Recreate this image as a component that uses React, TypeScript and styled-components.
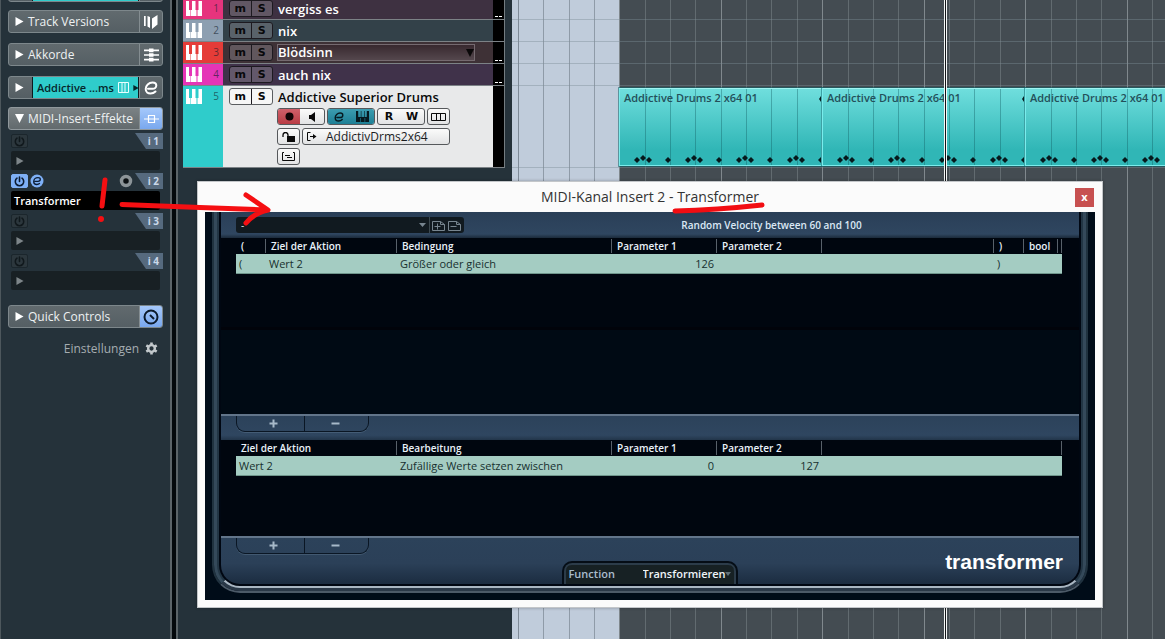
import React from 'react';
import styled, { createGlobalStyle, css } from 'styled-components';

const GlobalStyle = createGlobalStyle`
  * { box-sizing: border-box; }
  body {
    margin: 0;
    background: #25323a;
    font-family: 'Open Sans', 'Noto Sans', sans-serif;
    overflow: hidden;
  }
  button, select { font-family: inherit; margin: 0; }
  button { padding: 0; cursor: pointer; }
  svg { display: block; flex: none; }
`;

const Desktop = styled.main`
  position: relative;
  display: flex;
  min-height: 100vh;
  overflow: hidden;
  background: #25323a;
`;

/* ---------- inspector ---------- */

const Sidebar = styled.aside`
  flex: none;
  width: 172px;
  padding: 0 7px;
  border-left: 1px solid #4d575c;
  border-right: 2px solid #5b6468;
`;

const Splitter = styled.div`
  flex: none;
  width: 4px;
  background: #04090c;
`;

const Section = styled.div<{ $gap: number; $clipped?: boolean; $open?: boolean }>`
  display: flex;
  height: 23px;
  margin-top: ${(p) => (p.$clipped ? '-21px' : '0')};
  margin-bottom: ${(p) => p.$gap}px;
  border: 1px solid ${(p) => (p.$open ? '#90989c' : '#7d878b')};
  border-radius: 3px;
  overflow: hidden;
  background: ${(p) =>
    p.$open ? 'linear-gradient(#7b8285, #626a6d)' : 'linear-gradient(#616a6e, #555f64)'};
`;

const SectionToggle = styled.button<{ $narrow?: boolean }>`
  display: flex;
  align-items: center;
  gap: 4px;
  flex: ${(p) => (p.$narrow ? '0 0 23px' : '1')};
  min-width: 0;
  padding-left: 6px;
  border: 0;
  background: none;
  color: #eef1f2;
  font-size: 12px;
  line-height: 20px;
  white-space: nowrap;
`;

const ChannelName = styled.div`
  flex: 1;
  display: flex;
  align-items: center;
  gap: 4px;
  min-width: 0;
  padding-left: 4px;
  border-left: 1px solid #0c1a1e;
  border-right: 1px solid #0c1a1e;
  background: #2fcccb;
  color: #06262a;
  font-size: 11px;
  font-weight: 600;
  -webkit-font-smoothing: antialiased;
  white-space: nowrap;
`;

const SectionIcon = styled.button<{ $lit?: boolean }>`
  display: flex;
  align-items: center;
  justify-content: center;
  flex: 0 0 23px;
  border: 0;
  border-left: 1px solid #848d91;
  background: ${(p) => (p.$lit ? 'linear-gradient(#a5c8fb, #79a8ee)' : 'transparent')};
`;

const InsertList = styled.ol`
  list-style: none;
  margin: -5px 0 15px 3px;
  padding: 0;
`;

const Insert = styled.li`
  margin-bottom: 3px;
`;

const InsertHead = styled.div`
  display: flex;
  align-items: center;
  gap: 2px;
  height: 16px;
  margin-bottom: 2px;
`;

const PowerButton = styled.button<{ $on?: boolean }>`
  display: flex;
  align-items: center;
  justify-content: center;
  width: 17px;
  height: 14px;
  border: 1px solid ${(p) => (p.$on ? '#7fb0f5' : '#1b262c')};
  border-radius: 2px;
  background: ${(p) => (p.$on ? '#7eb0f7' : '#2c373d')};
`;

const RoundButton = styled.button<{ $push?: boolean }>`
  display: flex;
  border: 0;
  background: none;
  margin-left: ${(p) => (p.$push ? 'auto' : '0')};
`;

const InsertTag = styled.span<{ $push?: boolean }>`
  width: 28px;
  height: 16px;
  margin-left: ${(p) => (p.$push ? 'auto' : '0')};
  padding-right: 4px;
  background: #566a7e;
  clip-path: polygon(0 0, 100% 0, 100% 100%, 11px 100%);
  color: #c9d8ea;
  font-size: 10px;
  font-weight: 700;
  line-height: 16px;
  text-align: right;
`;

const InsertSlot = styled.button<{ $loaded?: boolean }>`
  display: flex;
  align-items: center;
  width: 149px;
  height: 19px;
  padding-left: ${(p) => (p.$loaded ? '3px' : '5px')};
  border: 0;
  border-radius: 2px;
  background: ${(p) => (p.$loaded ? '#000' : '#182024')};
  color: #fff;
  font-size: 11px;
  font-weight: 600;
`;

const SettingsRow = styled.button`
  display: flex;
  align-items: center;
  justify-content: flex-end;
  gap: 6px;
  width: 100%;
  height: 20px;
  padding-right: 5px;
  border: 0;
  background: none;
  color: #a5adb1;
  font-size: 12px;
`;

/* ---------- track list ---------- */

const TrackPanel = styled.section`
  flex: none;
  width: 336px;
  padding: 0 7px 0 5px;
  border-left: 2px solid #5b6468;
`;

const TrackRows = styled.ol`
  list-style: none;
  margin: -2px 0 0;
  padding: 0;
  border-right: 1px solid #737c80;
`;

const Track = styled.li<{ $bg: string; $tall?: boolean }>`
  display: flex;
  height: ${(p) => (p.$tall ? '82px' : '22px')};
  border-bottom: 1px solid #7c8286;
  background: ${(p) => p.$bg};
`;

const TrackStrip = styled.div<{ $color: string }>`
  flex: none;
  display: flex;
  align-items: flex-start;
  justify-content: space-between;
  width: 40px;
  padding: 3px 4px 0 3px;
  background: ${(p) => p.$color};
  color: rgba(20, 30, 45, 0.65);
  font-size: 10px;
  line-height: 14px;
`;

const TrackBody = styled.div`
  flex: 1;
  display: flex;
  align-items: flex-start;
  gap: 5px;
  min-width: 0;
  padding: 2px 0 0 6px;
`;

const MuteSolo = styled.div<{ $light?: boolean }>`
  flex: none;
  display: flex;
  width: 44px;
  height: 17px;
  border: 1px solid ${(p) => (p.$light ? '#5a5d60' : '#1d1a20')};
  border-radius: 3px;
  background: ${(p) => (p.$light ? '#f6f6f6' : 'rgba(190, 185, 195, 0.28)')};
`;

const LetterButton = styled.button`
  flex: 1;
  border: 0;
  background: none;
  color: #08080a;
  font-family: 'DejaVu Sans', sans-serif;
  font-size: 11px;
  font-weight: 700;
  line-height: 15px;
  & + & { border-left: 1px solid #1d1a20; }
`;

const TrackMain = styled.div`
  flex: 1;
  min-width: 0;
`;

const TrackName = styled.div<{ $dark?: boolean }>`
  margin-bottom: ${(p) => (p.$dark ? '2px' : '0')};
  color: ${(p) => (p.$dark ? '#08090a' : '#fff')};
  font-size: 13px;
  font-weight: 600;
  line-height: 18px;
  white-space: nowrap;
`;

const NameSelect = styled.div`
  position: relative;
  width: 198px;
  height: 17px;
  margin-left: -1px;
  select {
    appearance: none;
    display: block;
    width: 100%;
    height: 17px;
    padding: 0;
    border: 1px solid #756a70;
    background: linear-gradient(#38292f, #54474d);
    color: #fff;
    font-size: 13px;
    font-weight: 600;
    line-height: 15px;
  }
  svg {
    position: absolute;
    right: 1px;
    top: 5px;
    pointer-events: none;
  }
`;

const Meter = styled.div`
  flex: none;
  display: flex;
  align-items: flex-end;
  gap: 1px;
  width: 11px;
  padding: 0 2px 2px;
  background: #000;
  i {
    width: 3px;
    height: 1px;
    background: #fff;
  }
`;

const ControlRow = styled.div`
  display: flex;
  gap: 2px;
  margin: 0 0 3px -1px;
`;

const ControlGroup = styled.div`
  display: flex;
  height: 17px;
  border: 1px solid #55585b;
  border-radius: 3px;
  overflow: hidden;
  background: linear-gradient(#fbfbfb, #e2e3e4);
`;

const Control = styled.button<{ $w: number; $tone?: 'red' | 'teal' }>`
  display: flex;
  align-items: center;
  justify-content: center;
  width: ${(p) => p.$w}px;
  border: 0;
  color: #0a0a0a;
  font-family: 'DejaVu Sans', sans-serif;
  font-size: 11px;
  font-weight: 700;
  line-height: 15px;
  background: ${(p) =>
    p.$tone === 'red'
      ? 'linear-gradient(#d0606a, #b83c44)'
      : p.$tone === 'teal'
        ? 'linear-gradient(#3c9db0, #1d7f95)'
        : 'none'};
  & + & { border-left: ${(p) => (p.$tone ? '1px solid #a8cfd6' : '0')}; }
`;

const OutputButton = styled.button`
  display: flex;
  align-items: center;
  gap: 9px;
  width: 148px;
  height: 17px;
  padding-left: 4px;
  border: 1px solid #55585b;
  border-radius: 3px;
  background: linear-gradient(#fbfbfb, #e2e3e4);
  color: #1a1c1e;
  font-size: 12px;
  line-height: 15px;
`;

/* ---------- arrangement ---------- */

const gridColumns = (bar: string, beat: string) => css`
  background-image:
    linear-gradient(${bar}, ${bar}), linear-gradient(${beat}, ${beat}),
    linear-gradient(${beat}, ${beat}), linear-gradient(${beat}, ${beat}),
    linear-gradient(${bar}, ${bar}), linear-gradient(${beat}, ${beat}),
    linear-gradient(${beat}, ${beat}), linear-gradient(${beat}, ${beat});
  background-size: 1px 100%;
`;

const Arrangement = styled.section`
  position: relative;
  flex: 1;
  display: flex;
  min-width: 0;
  overflow: hidden;
`;

const LaneRows = styled.div`
  position: absolute;
  inset: -2px 0 auto;
  pointer-events: none;
`;

const LaneLine = styled.div<{ $tall?: boolean }>`
  height: ${(p) => (p.$tall ? '82px' : '22px')};
  border-bottom: 1px solid rgba(125, 140, 150, 0.42);
`;

const PreRoll = styled.div`
  flex: none;
  width: 107px;
  background-color: #c0ccdb;
  ${gridColumns('#7f8b98', '#8f9ba8')}
  background-position: 6px 0, 31px 0, 57px 0, 82px 0, 6px 0, 31px 0, 57px 0, 82px 0;
  background-repeat: no-repeat;
`;

const BarColumn = styled.div`
  flex: none;
  width: 203px;
  background-color: #444c52;
  ${gridColumns('#80888d', '#626b70')}
  background-position: 0 0, 26px 0, 51px 0, 76px 0, 102px 0, 127px 0, 152px 0, 178px 0;
  background-repeat: no-repeat;
`;

const ClipLane = styled.div`
  position: absolute;
  left: 107px;
  top: 88px;
  display: flex;
`;

const Clip = styled.article`
  position: relative;
  flex: none;
  width: 203px;
  height: 78px;
  padding-left: 4px;
  border: 1px solid #7aecec;
  border-top-color: #a0f4f2;
  outline: 1px solid rgba(12, 100, 105, 0.55);
  background-color: #35bcbc;
  background-image:
    linear-gradient(rgba(16, 90, 95, 0.38), rgba(16, 90, 95, 0.38)),
    linear-gradient(rgba(16, 90, 95, 0.38), rgba(16, 90, 95, 0.38)),
    linear-gradient(rgba(16, 90, 95, 0.38), rgba(16, 90, 95, 0.38)),
    linear-gradient(rgba(16, 90, 95, 0.38), rgba(16, 90, 95, 0.38)),
    linear-gradient(rgba(16, 90, 95, 0.38), rgba(16, 90, 95, 0.38)),
    linear-gradient(rgba(16, 90, 95, 0.38), rgba(16, 90, 95, 0.38)),
    linear-gradient(rgba(16, 90, 95, 0.38), rgba(16, 90, 95, 0.38)),
    linear-gradient(#6fdedd, #30b6b6 80%);
  background-size:
    1px 100%, 1px 100%, 1px 100%, 1px 100%, 1px 100%, 1px 100%, 1px 100%, 100% 100%;
  background-position:
    25px 0, 50px 0, 75px 0, 101px 0, 126px 0, 151px 0, 177px 0, 0 0;
  background-repeat: no-repeat;
  color: #24505a;
  font-size: 11px;
  font-weight: 600;
  line-height: 18px;
  white-space: nowrap;
  svg {
    position: absolute;
    left: 0;
    top: 0;
  }
`;

const Playhead = styled.div`
  position: absolute;
  inset: 0 auto 0 432px;
  width: 3px;
  border: solid #f4f6f6;
  border-width: 0 1px;
  background: #101417;
`;

/* ---------- plug-in window ---------- */

const Dialog = styled.section`
  position: absolute;
  left: 197px;
  right: 62px;
  top: 181px;
  padding: 0 7px 7px;
  border: 1px solid #c3c6c9;
  background: #fbfbfb;
  box-shadow: 0 0 3px rgba(0, 0, 0, 0.3);
`;

const TitleBar = styled.header`
  display: grid;
  grid-template-columns: 1fr auto 1fr;
  align-items: center;
  height: 30px;
`;

const Title = styled.h1`
  grid-column: 2;
  margin: 0;
  color: #333;
  font-size: 14px;
  font-weight: 400;
  line-height: 30px;
  white-space: nowrap;
`;

const Marked = styled.span`
  position: relative;
  svg {
    position: absolute;
    left: -6px;
    top: 14px;
  }
`;

const CloseButton = styled.button`
  justify-self: end;
  width: 19px;
  height: 19px;
  margin-right: 1px;
  border: 0;
  background: #c75050;
  color: #fff;
  font-size: 11px;
  font-weight: 700;
  line-height: 16px;
`;

const PluginShell = styled.div`
  padding: 0 7px 7px;
  background: #000c18;
`;

const OuterRail = styled.div`
  border: solid #20323f;
  border-width: 0 2px 2px;
  border-bottom-color: #4c5a68;
  border-radius: 0 0 28px 28px;
`;

const MiddleRail = styled.div`
  border: solid #34495a;
  border-width: 0 3px 3px;
  border-bottom-color: #2a3847;
  border-radius: 0 0 26px 26px;
  background: #34495a;
`;

const InnerRail = styled.div`
  border: solid #223544;
  border-width: 0 2px 2px;
  border-bottom-color: #a9b6c2;
  border-radius: 0 0 23px 23px;
  background: #000712;
  padding: 0 2px 2px;
`;

const Plugin = styled.div`
  border-radius: 0 0 19px 19px;
  overflow: hidden;
  background: #00060f;
`;

const Toolbar = styled.div`
  display: flex;
  align-items: center;
  height: 26px;
  padding-left: 15px;
  background: linear-gradient(#2a3f57, #2f4660 85%, #1b2a3a);
`;

const PresetBar = styled.div`
  display: flex;
  align-items: center;
  gap: 2px;
  width: 228px;
  height: 16px;
  padding-right: 2px;
  border-radius: 3px;
  background: #111a20;
`;

const PresetSelect = styled.div`
  position: relative;
  flex: 1;
  border-right: 1px solid #3b474e;
  select {
    appearance: none;
    display: block;
    width: 100%;
    height: 16px;
    padding: 0 5px;
    border: 0;
    background: none;
    color: #dfe7ee;
    font-size: 10px;
  }
  svg {
    position: absolute;
    right: 3px;
    top: 6px;
    pointer-events: none;
  }
`;

const IconButton = styled.button`
  display: flex;
  border: 0;
  background: none;
`;

const PresetName = styled.output`
  flex: 1;
  color: #dbe8f5;
  font-size: 10px;
  font-weight: 600;
  text-align: center;
`;

const ListPane = styled.div<{ $h: number }>`
  min-height: ${(p) => p.$h}px;
  padding: 0 17px 0 15px;
  background: #00060f;
  & + & { border-top: 3px solid #01030a; background: #000a14; }
`;

const LogicTable = styled.table`
  width: 100%;
  table-layout: fixed;
  border-collapse: separate;
  border-spacing: 0;
  th {
    height: 16px;
    padding: 0 0 0 5px;
    background: linear-gradient(#58616a, #58616a) right 1px / 1px 14px no-repeat;
    color: #eaf2fa;
    font-size: 10px;
    font-weight: 600;
    line-height: 16px;
    text-align: left;
    white-space: nowrap;
  }
  td {
    height: 20px;
    padding: 0 3px;
    border-bottom: 1px solid #6f958b;
    background: #a4ccc2;
    color: #17302f;
    font-size: 11px;
    line-height: 19px;
    white-space: nowrap;
  }
`;

const NumberCell = styled.td`
  text-align: right;
`;

const Bar = styled.div<{ $foot?: boolean }>`
  display: grid;
  grid-template-columns: 1fr auto 1fr;
  align-items: start;
  height: ${(p) => (p.$foot ? '48px' : '26px')};
  padding: 0 16px 0 15px;
  border-top: 2px solid #62758a;
  background: ${(p) =>
    p.$foot
      ? 'linear-gradient(#2c425a, #2b4058 55%, #1b2c40)'
      : 'linear-gradient(#2c425a, #2f4660 80%, #22354a)'};
`;

const AddRemove = styled.div`
  display: flex;
  width: 133px;
  height: 16px;
  border: solid #0a1624;
  border-width: 0 1px 1px;
  border-radius: 0 0 9px 9px;
  box-shadow: 0 1px 0 rgba(120, 145, 170, 0.3);
  button {
    display: flex;
    justify-content: center;
    flex: 1;
    padding: 3px 2px 0 0;
    border: 0;
    background: none;
  }
  button:first-child { flex: 0 0 68px; border-right: 1px solid #0a1624; padding: 3px 0 0 5px; }
`;

const FunctionTab = styled.label`
  align-self: end;
  position: relative;
  display: flex;
  align-items: center;
  width: 176px;
  height: 23px;
  padding: 0 5px;
  border: solid #050d16;
  border-width: 2px 2px 0;
  border-radius: 10px 10px 0 0;
  background: #172124;
  box-shadow: inset 0 2px 0 #2c3c4a, inset 2px 0 0 #2c3c4a, inset -2px 0 0 #2c3c4a;
  color: #a9bccd;
  font-size: 11px;
  font-weight: 600;
  select {
    appearance: none;
    width: 88px;
    margin-left: auto;
    padding: 0;
    border: 0;
    background: none;
    color: #eef4f8;
    font-size: 11px;
    font-weight: 600;
  }
  svg {
    position: absolute;
    right: 5px;
    top: 9px;
    pointer-events: none;
  }
`;

const Brand = styled.strong`
  justify-self: end;
  margin-top: 11px;
  color: #fff;
  font-family: 'Liberation Sans', Arial, sans-serif;
  font-size: 21px;
  line-height: 26px;
`;

const Annotation = styled.svg`
  position: absolute;
  left: 90px;
  top: 170px;
  pointer-events: none;
`;

/* ---------- icons ---------- */

const ArrowRight = ({ color = '#fff', size = 9 }: { color?: string; size?: number }) => (
  <svg width={size} height={size} viewBox="0 0 9 9"><path d="M0.5 0L8.5 4.5L0.5 9Z" fill={color} /></svg>
);

const ArrowDown = ({ color = '#fff', w = 9, h = 9 }: { color?: string; w?: number; h?: number }) => (
  <svg width={w} height={h} viewBox="0 0 9 9" preserveAspectRatio="none"><path d="M0 0H9L4.5 9Z" fill={color} /></svg>
);

const PianoIcon = () => (
  <svg width="16" height="15" viewBox="0 0 16 15">
    <path d="M0 0H3V9H4.500V15H0ZM5 9H6V0H9.500V9H10.500V15H5ZM11.500 9H12.500V0H16V15H11.500Z" fill="#fff" />
  </svg>
);

const KeysIcon = () => (
  <svg width="13" height="11" viewBox="0 0 13 11">
    <path d="M0 0H2.200V6H4.800V0H5.400V6H8V0H8.600V6H10.800V0H13V11H9.200V7H8.600V11H4.600V7H4V11H0Z" fill="#061a20" />
  </svg>
);

const EditIcon = ({ color, size }: { color: string; size: number }) => (
  <svg width={size} height={size} viewBox="0 0 14 14" fill="none" stroke={color} strokeWidth="2" strokeLinecap="round">
    <path d="M4 7.800H8.500C10.500 7.800 12.300 6.500 12.300 4.500C12.300 2.500 10.500 1.500 8.500 1.500C4.800 1.500 1.700 4.500 1.700 8C1.700 11 4 12.600 6.500 12.600C8.500 12.600 10 12 11.500 10.500" />
  </svg>
);

const PowerIcon = ({ color }: { color: string }) => (
  <svg width="11" height="11" viewBox="0 0 11 11" fill="none" stroke={color} strokeWidth="1.600" strokeLinecap="round">
    <path d="M3 2.200A4.200 4.200 0 1 0 8 2.200M5.500 1V5.500" />
  </svg>
);

const VersionsIcon = () => (
  <svg width="14" height="14" viewBox="0 0 14 14" fill="#fff">
    <path d="M0 1H1.700V11H0ZM3.500 1L6 2V13L3.500 11.500ZM8 3.500L13.500 0V9.500L8 14Z" />
  </svg>
);

const ChordIcon = () => (
  <svg width="15" height="14" viewBox="0 0 15 14" fill="#fff">
    <path d="M0 1.500H15V3.200H0ZM0 6.200H15V7.800H0ZM0 10.800H15V12.500H0ZM5 0.500H9.500V4.200H5ZM5 5.200H9.500V8.800H5ZM5 9.800H9.500V13.500H5Z" />
  </svg>
);

const InsertIcon = () => (
  <svg width="15" height="10" viewBox="0 0 15 10" fill="none" stroke="#fff" strokeWidth="1.200">
    <path d="M0 5H15M4.500 1.500H10.500V8.500H4.500Z" />
  </svg>
);

const KnobIcon = () => (
  <svg width="16" height="16" viewBox="0 0 16 16" fill="none" stroke="#0b1a2c" strokeWidth="2">
    <circle cx="8" cy="8" r="6.500" />
    <path d="M7 6L11 10" />
  </svg>
);

const GearIcon = () => (
  <svg width="13" height="13" viewBox="0 0 14 14" fill="none" stroke="#c3c9cc">
    <circle cx="7" cy="7" r="3.600" strokeWidth="2.600" />
    <path d="M7 0.500V3M7 11V13.500M1.400 3.750L3.500 5M10.500 9L12.600 10.250M1.400 10.250L3.500 9M10.500 5L12.600 3.750" strokeWidth="2.800" />
  </svg>
);

const PresetIcon = ({ plus }: { plus?: boolean }) => (
  <svg width="14" height="11" viewBox="0 0 14 11" fill="none" stroke="#77858f">
    <path d="M0.500 1.500H8.500L12.500 4.500V10.500H0.500ZM8.500 1.500V4.500H12.500M2.500 6.500H8.500" />
    {plus && <path d="M5.500 3.500V9.500" />}
  </svg>
);

const SignIcon = ({ plus }: { plus?: boolean }) => (
  <svg width="9" height="9" viewBox="0 0 9 9" stroke="#a7b9c9" strokeWidth="2">
    <path d={plus ? 'M0.500 4.500H8.500M4.500 0.500V8.500' : 'M0.500 4.500H8.500'} />
  </svg>
);

const noteOffsets: [number, number][] = [];
[0, 51, 102, 153].forEach((beat) => {
  noteOffsets.push([beat + 17, 71], [beat + 23, 69], [beat + 29, 71]);
  noteOffsets.push([beat + 48, 71]);
});

const ClipNotes = () => (
  <svg width="201" height="76" viewBox="0 0 201 76" fill="#06191c">
    {noteOffsets.map(([x, y]) => (
      <path key={x} d={`M${x} ${y - 3}L${x + 3} ${y}L${x} ${y + 3}L${x - 3} ${y}Z`} />
    ))}
    <path d="M201 7L199 10L201 13Z" />
  </svg>
);

/* ---------- page ---------- */

const tracks = [
  { n: 1, name: 'vergiss es', strip: '#e6347d', bg: '#3e3141', signal: true },
  { n: 2, name: 'nix', strip: '#8d9fb1', bg: '#334149', signal: false },
  { n: 3, name: 'Blödsinn', strip: '#e53c38', bg: '#3e3136', signal: true, select: true },
  { n: 4, name: 'auch nix', strip: '#e535b7', bg: '#40324a', signal: true },
];

const inserts = [
  { id: 'i 1', name: '' },
  { id: 'i 2', name: 'Transformer' },
  { id: 'i 3', name: '' },
  { id: 'i 4', name: '' },
];

const MuteSoloPair = ({ light }: { light?: boolean }) => (
  <MuteSolo $light={light}>
    <LetterButton>m</LetterButton>
    <LetterButton>S</LetterButton>
  </MuteSolo>
);

const AddRemoveButtons = () => (
  <AddRemove>
    <button aria-label="Add line"><SignIcon plus /></button>
    <button aria-label="Remove line"><SignIcon /></button>
  </AddRemove>
);

const Inspector = () => (
  <Sidebar>
    <Section $gap={8} $clipped>
      <SectionToggle $narrow aria-label="Channel" />
      <ChannelName />
      <SectionIcon aria-label="Edit channel" />
    </Section>
    <Section $gap={10}>
      <SectionToggle><ArrowRight />Track Versions</SectionToggle>
      <SectionIcon aria-label="Versions"><VersionsIcon /></SectionIcon>
    </Section>
    <Section $gap={10}>
      <SectionToggle><ArrowRight />Akkorde</SectionToggle>
      <SectionIcon aria-label="Chords"><ChordIcon /></SectionIcon>
    </Section>
    <Section $gap={8}>
      <SectionToggle $narrow aria-label="Expand instrument"><ArrowRight /></SectionToggle>
      <ChannelName>
        Addictive ...ms
        <svg width="11" height="11" viewBox="0 0 11 11" fill="none" stroke="#e8ffff">
          <path d="M0.500 0.500H10.500V10.500H0.500ZM4 0.500V10.500M7 0.500V10.500" />
        </svg>
        <ArrowRight color="#06262a" size={6} />
      </ChannelName>
      <SectionIcon aria-label="Edit instrument"><EditIcon color="#fff" size={14} /></SectionIcon>
    </Section>
    <Section $gap={8} $open>
      <SectionToggle><ArrowDown />MIDI-Insert-Effekte</SectionToggle>
      <SectionIcon $lit aria-label="Bypass inserts"><InsertIcon /></SectionIcon>
    </Section>
    <InsertList>
      {inserts.map(({ id, name }) => (
        <Insert key={id}>
          <InsertHead>
            <PowerButton $on={!!name} aria-label={`Power ${id}`}>
              <PowerIcon color={name ? '#0b1c33' : '#10181c'} />
            </PowerButton>
            {name && (
              <>
                <RoundButton aria-label="Edit insert">
                  <svg width="14" height="14" viewBox="0 0 14 14">
                    <circle cx="7" cy="7" r="6.500" fill="#7eb0f7" />
                    <path d="M4.500 7.300H8C9.200 7.300 10.300 6.500 10.300 5.300C10.300 4.200 9.200 3.600 8 3.600C5.600 3.600 3.700 5.500 3.700 7.700C3.700 9.500 5.200 10.500 6.800 10.500C8 10.500 9 10 9.900 9.200" fill="none" stroke="#0b1c33" strokeWidth="1.300" />
                  </svg>
                </RoundButton>
                <RoundButton $push aria-label="Pre or post">
                  <svg width="14" height="14" viewBox="0 0 14 14">
                    <circle cx="7" cy="7" r="4.500" fill="#0c1114" stroke="#8c9498" strokeWidth="3.500" />
                  </svg>
                </RoundButton>
              </>
            )}
            <InsertTag $push={!name}>{id}</InsertTag>
          </InsertHead>
          <InsertSlot $loaded={!!name} aria-label={name || `Empty slot ${id}`}>
            {name || <ArrowRight color="#7d8589" size={8} />}
          </InsertSlot>
        </Insert>
      ))}
    </InsertList>
    <Section $gap={10}>
      <SectionToggle><ArrowRight />Quick Controls</SectionToggle>
      <SectionIcon $lit aria-label="Quick controls"><KnobIcon /></SectionIcon>
    </Section>
    <SettingsRow>Einstellungen<GearIcon /></SettingsRow>
  </Sidebar>
);

const TrackList = () => (
  <TrackPanel>
    <TrackRows>
      {tracks.map((t) => (
        <Track key={t.n} $bg={t.bg}>
          <TrackStrip $color={t.strip}><PianoIcon />{t.n}</TrackStrip>
          <TrackBody>
            <MuteSoloPair />
            {t.select ? (
              <NameSelect>
                <select aria-label="Track name" defaultValue={t.name}><option>{t.name}</option></select>
                <ArrowDown color="#0a0809" w={8} h={8} />
              </NameSelect>
            ) : (
              <TrackName>{t.name}</TrackName>
            )}
          </TrackBody>
          <Meter>{t.signal && (<><i /><i /></>)}</Meter>
        </Track>
      ))}
      <Track $bg="#e8e9ea" $tall>
        <TrackStrip $color="#2fcccb"><PianoIcon />5</TrackStrip>
        <TrackBody>
          <MuteSoloPair light />
          <TrackMain>
            <TrackName $dark>Addictive Superior Drums</TrackName>
            <ControlRow>
              <ControlGroup>
                <Control $w={22} $tone="red" aria-label="Record">
                  <svg width="9" height="9" viewBox="0 0 9 9"><circle cx="4.500" cy="4.500" r="4" fill="#120406" /></svg>
                </Control>
                <Control $w={24} aria-label="Monitor">
                  <svg width="7" height="10" viewBox="0 0 7 10"><path d="M0 3H2L6 0V10L2 7H0Z" fill="#0a0a0a" /></svg>
                </Control>
              </ControlGroup>
              <ControlGroup>
                <Control $w={22} $tone="teal" aria-label="Edit"><EditIcon color="#061a20" size={10} /></Control>
                <Control $w={24} $tone="teal" aria-label="Instrument"><KeysIcon /></Control>
              </ControlGroup>
              <ControlGroup>
                <Control $w={22}>R</Control>
                <Control $w={24}>W</Control>
              </ControlGroup>
              <ControlGroup>
                <Control $w={21} aria-label="Lanes">
                  <svg width="15" height="8" viewBox="0 0 15 8" fill="none" stroke="#0a0a0a"><path d="M0.500 0.500H14.500V7.500H0.500ZM5.500 0.500V7.500M9.500 0.500V7.500" /></svg>
                </Control>
              </ControlGroup>
            </ControlRow>
            <ControlRow>
              <ControlGroup>
                <Control $w={21} aria-label="Lock">
                  <svg width="13" height="10" viewBox="0 0 13 10"><path d="M5 4H13V10H5Z" fill="#0a0a0a" /><path d="M1 5V3A2.500 2.500 0 0 1 6 3V5" fill="none" stroke="#0a0a0a" strokeWidth="1.300" /></svg>
                </Control>
              </ControlGroup>
              <OutputButton>
                <svg width="10" height="9" viewBox="0 0 10 9" fill="none" stroke="#0a0a0a"><path d="M3.500 0.500H0.500V8.500H3.500M3 4.500H8" /><path d="M6 2L9.500 4.500L6 7Z" fill="#0a0a0a" stroke="none" /></svg>
                AddictivDrms2x64
              </OutputButton>
            </ControlRow>
            <ControlRow>
              <ControlGroup>
                <Control $w={21} aria-label="Drum map">
                  <svg width="13" height="9" viewBox="0 0 13 9" fill="none" stroke="#0a0a0a"><path d="M2 0.500H0.500V8.500H12.500V0.500H11M3 3.500H8M5 5.500H10" /></svg>
                </Control>
              </ControlGroup>
            </ControlRow>
          </TrackMain>
        </TrackBody>
        <Meter />
      </Track>
    </TrackRows>
  </TrackPanel>
);

const Arranger = () => (
  <Arrangement>
    <PreRoll />
    {Array.from({ length: 12 }, (_, i) => <BarColumn key={i} />)}
    <LaneRows>
      <LaneLine /><LaneLine /><LaneLine /><LaneLine /><LaneLine $tall />
    </LaneRows>
    <ClipLane>
      {[1, 2, 3].map((i) => (
        <Clip key={i}>Addictive Drums 2 x64 01<ClipNotes /></Clip>
      ))}
    </ClipLane>
    <Playhead />
  </Arrangement>
);

const TransformerWindow = () => (
  <Dialog role="dialog" aria-label="MIDI-Kanal Insert 2">
    <TitleBar>
      <Title>
        MIDI-Kanal Insert 2 - <Marked>Transformer
          <svg width="96" height="14" viewBox="0 0 96 14"><path d="M4 10Q45 9 91 4" fill="none" stroke="#f20d12" strokeWidth="5" strokeLinecap="round" /></svg>
        </Marked>
      </Title>
      <CloseButton aria-label="Close">x</CloseButton>
    </TitleBar>
    <PluginShell>
      <OuterRail><MiddleRail><InnerRail>
        <Plugin>
          <Toolbar>
            <PresetBar>
              <PresetSelect>
                <select aria-label="Preset" defaultValue="-"><option>-</option></select>
                <ArrowDown color="#77858f" w={7} h={4} />
              </PresetSelect>
              <IconButton aria-label="Store preset"><PresetIcon plus /></IconButton>
              <IconButton aria-label="Remove preset"><PresetIcon /></IconButton>
            </PresetBar>
            <PresetName>Random Velocity between 60 and 100</PresetName>
          </Toolbar>
          <ListPane $h={89}>
            <LogicTable>
              <colgroup>
                <col style={{ width: 30 }} /><col style={{ width: 131 }} /><col style={{ width: 215 }} />
                <col style={{ width: 105 }} /><col style={{ width: 105 }} /><col />
                <col style={{ width: 30 }} /><col style={{ width: 34 }} /><col style={{ width: 4 }} />
              </colgroup>
              <thead>
                <tr>
                  <th>(</th><th>Ziel der Aktion</th><th>Bedingung</th><th>Parameter 1</th>
                  <th>Parameter 2</th><th /><th>)</th><th>bool</th><th />
                </tr>
              </thead>
              <tbody>
                <tr>
                  <td>(</td><td>Wert 2</td><td>Größer oder gleich</td><NumberCell>126</NumberCell>
                  <NumberCell /><td /><td>)</td><td /><td />
                </tr>
              </tbody>
            </LogicTable>
          </ListPane>
          <ListPane $h={87} />
          <Bar><AddRemoveButtons /></Bar>
          <ListPane $h={96}>
            <LogicTable>
              <colgroup>
                <col style={{ width: 161 }} /><col style={{ width: 215 }} />
                <col style={{ width: 105 }} /><col style={{ width: 105 }} /><col />
              </colgroup>
              <thead>
                <tr>
                  <th>Ziel der Aktion</th><th>Bearbeitung</th><th>Parameter 1</th><th>Parameter 2</th><th />
                </tr>
              </thead>
              <tbody>
                <tr>
                  <td>Wert 2</td><td>Zufällige Werte setzen zwischen</td>
                  <NumberCell>0</NumberCell><NumberCell>127</NumberCell><td />
                </tr>
              </tbody>
            </LogicTable>
          </ListPane>
          <Bar $foot>
            <AddRemoveButtons />
            <FunctionTab>
              Function
              <select defaultValue="Transformieren"><option>Transformieren</option></select>
              <ArrowDown color="#5f7078" w={6} h={4} />
            </FunctionTab>
            <Brand>transformer</Brand>
          </Bar>
        </Plugin>
      </InnerRail></MiddleRail></OuterRail>
    </PluginShell>
  </Dialog>
);

export default function App() {
  return (
    <>
      <GlobalStyle />
      <Desktop>
        <Inspector />
        <Splitter />
        <TrackList />
        <Arranger />
        <TransformerWindow />
        <Annotation width="190" height="64" viewBox="0 0 190 64" fill="none" stroke="#f50f12" strokeWidth="5" strokeLinecap="round" strokeLinejoin="round">
          <path d="M15 10L12 36" />
          <circle cx="11" cy="49" r="3" fill="#f50f12" stroke="none" />
          <path d="M32 34.500L110 37.500L176 40M156 25L178 40Q164 43 156 53" />
        </Annotation>
      </Desktop>
    </>
  );
}
